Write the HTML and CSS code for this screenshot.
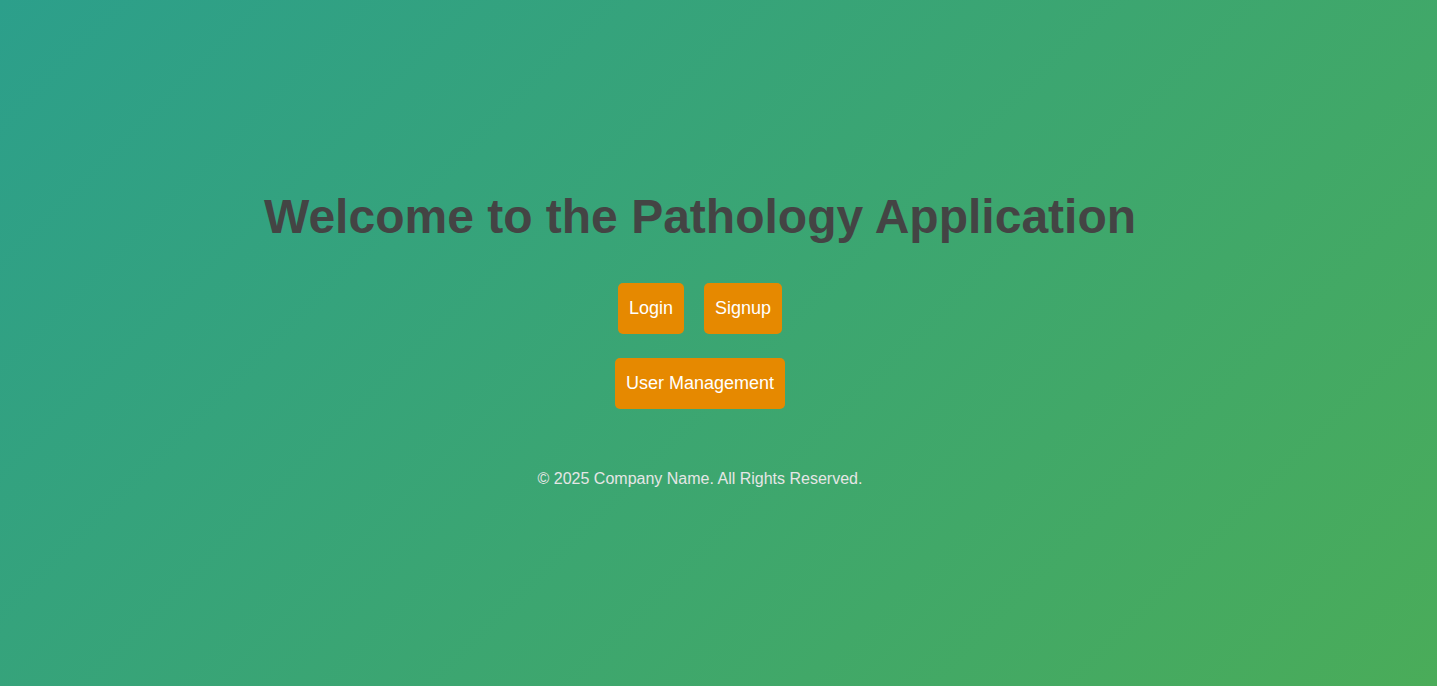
FILE: index.html
```html
<!DOCTYPE html>
<html lang="en">
<head>
<meta charset="utf-8">
<title>Pathology Application</title>
<link rel="stylesheet" href="styles.css">
</head>
<body>
<div class="page">
  <main class="hero">
    <h1 class="title">Welcome to the Pathology Application</h1>
    <div class="actions">
      <button class="btn">Login</button>
      <button class="btn">Signup</button>
    </div>
    <div class="actions">
      <button class="btn">User Management</button>
    </div>
  </main>
  <footer class="footer">© 2025 Company Name. All Rights Reserved.</footer>
</div>
</body>
</html>
```

FILE: styles.css
```css
html, body {
  margin: 0;
  height: 100%;
}
body {
  background: linear-gradient(135deg, #2c9f8b 0%, #4aac59 100%);
  font-family: "Liberation Sans", Arial, sans-serif;
}
.page {
  width: 1400px;
  padding-top: 189px;
  display: flex;
  flex-direction: column;
  align-items: center;
}
.hero {
  display: flex;
  flex-direction: column;
  align-items: center;
}
.title {
  margin: 0 0 39px;
  font-size: 48px;
  font-weight: bold;
  color: #444444;
}
.actions {
  display: flex;
  gap: 20px;
  margin-bottom: 24px;
}
.btn {
  font-family: "Liberation Sans", Arial, sans-serif;
  font-size: 18px;
  color: #ffffff;
  background: #e68900;
  border: none;
  border-radius: 5px;
  padding: 15px 11px;
  cursor: pointer;
}
.footer {
  margin-top: 37px;
  font-size: 16px;
  color: #e6e6e6;
}
```
